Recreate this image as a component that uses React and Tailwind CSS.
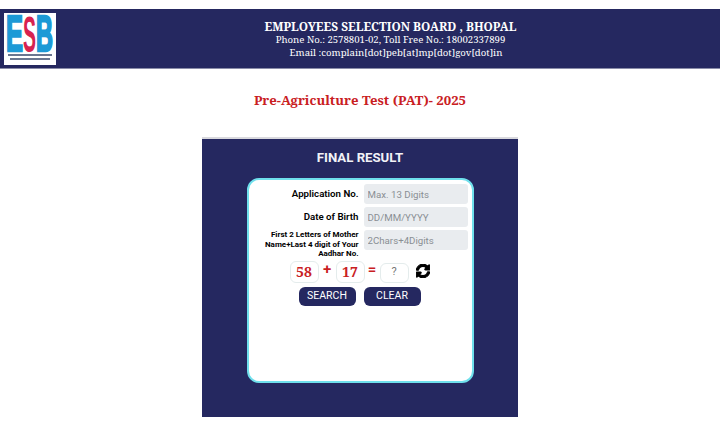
import React from 'react';
import { FaSyncAlt } from 'react-icons/fa';

const serif = "font-['Noto_Serif','DejaVu_Serif',serif]";
const roboto = "font-['Roboto',sans-serif]";

// ESB logo
const Logo = () => (
  <svg viewBox="0 0 52 52" className="w-[52px] h-[52px] shrink-0">
    <rect width="52" height="52" fill="#fff" />
    <text x="2" y="38" fontFamily="Liberation Sans" fontWeight="700" fontSize="50" fill="#1c9ad6" stroke="#1c9ad6" strokeWidth="2.5" textLength="17" lengthAdjust="spacingAndGlyphs">E</text>
    <text x="32" y="38" fontFamily="Liberation Sans" fontWeight="700" fontSize="50" fill="#1c9ad6" stroke="#1c9ad6" strokeWidth="2.5" textLength="17" lengthAdjust="spacingAndGlyphs">B</text>
    <text x="19" y="39" fontFamily="Liberation Sans" fontWeight="700" fontSize="50" fill="#d8234f" textLength="13" lengthAdjust="spacingAndGlyphs">S</text>
    <rect x="4" y="41" width="44" height="2" fill="#6a7690" />
    <rect x="6" y="45" width="40" height="2" fill="#6a7690" />
  </svg>
);

const Field = ({ label, placeholder, small }) => (
  <div className={`flex gap-[5px] ${small ? 'items-start' : 'items-center'}`}>
    <label className={`w-[110px] pl-0 text-right text-black ${small ? 'text-[8px] leading-[9.5px] font-bold' : 'text-[9.7px] font-semibold'}`}>
      {label}
    </label>
    <input
      placeholder={placeholder}
      className="w-[104px] h-[20px] rounded-[3px] bg-[#e9ecef] pl-[4px] text-[9.7px] placeholder:text-[#8a8f94] outline-none"
    />
  </div>
);

const Box = ({ children, tall }) => (
  <div className={`w-[29px] ${tall ? 'h-[22px] text-[14px] font-bold text-[#c9201f] ' + serif : 'h-[20px] mt-[2px] text-[11px] text-[#777] ' + roboto} flex items-center justify-center rounded-[6px] border border-[#e4ecec] bg-white`}>
    {children}
  </div>
);

export default function App() {
  return (
    <div className={`w-[720px] h-[433px] bg-white overflow-hidden pt-[9px] ${roboto}`}>
      <header className="h-[60px] bg-[#252860] border-b border-[#8a8ca8] flex items-center pl-[4px]">
        <Logo />
        <div className={`flex-1 pl-[5px] text-center text-white ${serif}`}>
          <div className="text-[11.8px] leading-[15px] font-bold">EMPLOYEES SELECTION BOARD , BHOPAL</div>
          <div className="text-[9.6px] leading-[12px]">Phone No.: 2578801-02, Toll Free No.: 18002337899</div>
          <div className="text-[9.6px] leading-[13px] pl-[11px]">Email :complain[dot]peb[at]mp[dot]gov[dot]in</div>
        </div>
      </header>

      <h1 className={`mt-[22px] text-center text-[13.2px] leading-[19px] font-bold text-[#c9201f] ${serif}`}>
        Pre-Agriculture Test (PAT)- 2025
      </h1>

      <main className="mt-[27px] ml-[202px] w-[316px] h-[280px] bg-[#252860] border-t-2 border-[#d9d9de] pt-[10px] flex flex-col items-center">
        <h2 className="text-[13.2px] leading-[18px] font-bold text-[#f2f2f7]">FINAL RESULT</h2>
        <div className="mt-[11px] w-[227px] h-[205px] rounded-[12px] border-2 border-[#6fe0ec] bg-white pt-[4px] flex flex-col">
          <div className="flex flex-col gap-[3px]">
            <Field label="Application No." placeholder="Max. 13 Digits" />
            <Field label="Date of Birth" placeholder="DD/MM/YYYY" />
            <Field small label="First 2 Letters of Mother Name+Last 4 digit of Your Aadhar No." placeholder="2Chars+4Digits" />
          </div>
          <div className="mt-[1px] ml-[41px] flex items-center h-[24px]">
            <Box tall>58</Box>
            <span className="w-[17px] text-center text-[15px] font-semibold text-[#c9201f] -mt-[4px]">+</span>
            <Box tall>17</Box>
            <span className="w-[15px] text-center text-[15px] font-semibold text-[#c9201f] -mt-[4px]">=</span>
            <Box>?</Box>
            <FaSyncAlt stroke="currentColor" strokeWidth={40} className="ml-[7px] -mt-[2px] w-[14px] h-[14px] text-black" />
          </div>
          <div className="mt-[3px] ml-[50px] flex gap-[8px]">
            <button className="w-[57px] h-[19px] rounded-[6px] bg-[#252860] text-white text-[10.5px]">SEARCH</button>
            <button className="w-[57px] h-[19px] rounded-[6px] bg-[#252860] text-white text-[10.5px]">CLEAR</button>
          </div>
        </div>
      </main>
    </div>
  );
}
